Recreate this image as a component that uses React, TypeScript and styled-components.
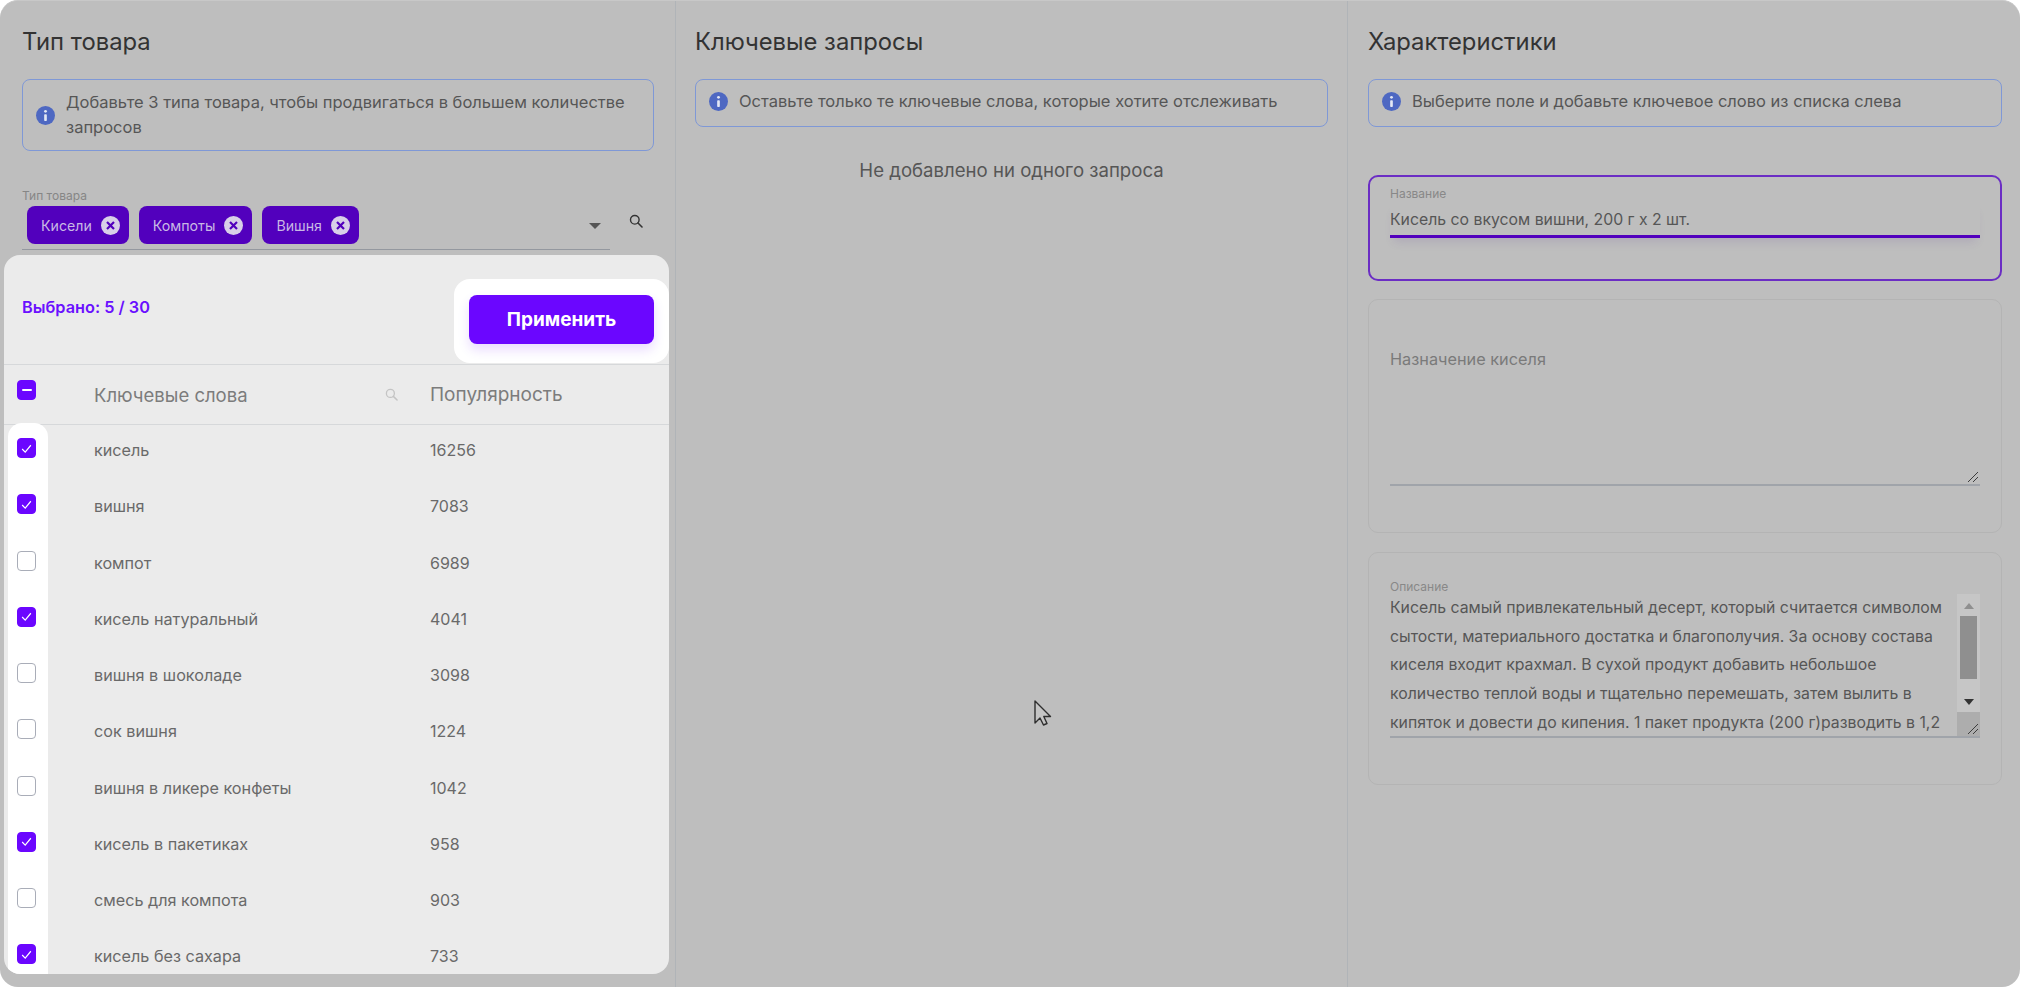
import React from "react";
import styled, { createGlobalStyle } from "styled-components";

const GlobalStyle = createGlobalStyle`
  html, body {
    margin: 0;
    padding: 0;
    background: #ffffff;
  }
  * {
    box-sizing: border-box;
  }
  body {
    font-family: Inter, "Noto Sans", "Liberation Sans", sans-serif;
  }
`;

const keywords = [
  { name: "кисель", count: 16256, checked: true },
  { name: "вишня", count: 7083, checked: true },
  { name: "компот", count: 6989, checked: false },
  { name: "кисель натуральный", count: 4041, checked: true },
  { name: "вишня в шоколаде", count: 3098, checked: false },
  { name: "сок вишня", count: 1224, checked: false },
  { name: "вишня в ликере конфеты", count: 1042, checked: false },
  { name: "кисель в пакетиках", count: 958, checked: true },
  { name: "смесь для компота", count: 903, checked: false },
  { name: "кисель без сахара", count: 733, checked: true },
];

const chips = ["Кисели", "Компоты", "Вишня"];

const descriptionLines = [
  "Кисель самый привлекательный десерт, который считается символом",
  "сытости, материального достатка и благополучия. За основу состава",
  "киселя входит крахмал. В сухой продукт добавить небольшое",
  "количество теплой воды и тщательно перемешать, затем вылить в",
  "кипяток и довести до кипения. 1 пакет продукта (200 г)разводить в 1,2",
];

const InfoIcon = () => (
  <InfoSvg viewBox="0 0 20 20">
    <circle cx="10" cy="10" r="10" fill="#4e68c2" />
    <circle cx="10" cy="5.6" r="1.5" fill="#e4e8f4" />
    <rect x="8.6" y="8.6" width="2.8" height="7.2" rx="0.8" fill="#e4e8f4" />
  </InfoSvg>
);

const SearchIcon = ({ color, size }: { color: string; size: number }) => (
  <svg width={size} height={size} viewBox="0 0 14 14" fill="none">
    <circle cx="5.8" cy="5.8" r="4.3" stroke={color} strokeWidth="1.4" />
    <path d="M9 9l4 4" stroke={color} strokeWidth="1.6" strokeLinecap="round" />
  </svg>
);

const ResizeGrip = () => (
  <GripSvg viewBox="0 0 12 12">
    <path d="M1 11L11 1M6 11l5-5" stroke="#3d3d3d" strokeWidth="1" fill="none" />
  </GripSvg>
);

const App: React.FC = () => {
  return (
    <>
      <GlobalStyle />
      <Board>
        <Column $right={21}>
          <Title>Тип товара</Title>
          <InfoBox $tall>
            <InfoIcon />
            <InfoText>Добавьте 3 типа товара, чтобы продвигаться в большем количестве запросов</InfoText>
          </InfoBox>
          <TypeLabel>Тип товара</TypeLabel>
          <TypeRow>
            <ChipField>
              {chips.map((chip) => (
                <Chip key={chip}>
                  {chip}
                  <svg width="19" height="19" viewBox="0 0 19 19">
                    <circle cx="9.5" cy="9.5" r="9.5" fill="#d8cfe8" />
                    <path d="M6 6l7 7M13 6l-7 7" stroke="#5200bd" strokeWidth="2.2" />
                  </svg>
                </Chip>
              ))}
              <DropArrow />
            </ChipField>
            <SearchSlot>
              <SearchIcon color="#333333" size={14} />
            </SearchSlot>
          </TypeRow>

          <Popup>
            <PopupHeader>
              <Selected>Выбрано: 5 / 30</Selected>
              <ApplySpot>
                <ApplyButton>Применить</ApplyButton>
              </ApplySpot>
            </PopupHeader>
            <TableHead>
              <HeadCheck>
                <CheckBox $checked>
                  <svg width="10" height="2" viewBox="0 0 10 2">
                    <rect width="10" height="2" rx="1" fill="#ffffff" />
                  </svg>
                </CheckBox>
              </HeadCheck>
              <HeadKeyword>
                Ключевые слова
                <SearchIcon color="#c4c4c4" size={13} />
              </HeadKeyword>
              <HeadCell>Популярность</HeadCell>
            </TableHead>
            <TableBody>
              {keywords.map((row, index) => (
                <Row key={row.name}>
                  <CheckCell $first={index === 0}>
                    <CheckBox $checked={row.checked}>
                      {row.checked && (
                        <svg width="13" height="13" viewBox="0 0 12 12" fill="none">
                          <path d="M2 6.500l2.800 2.800L10 3" stroke="#ffffff" strokeWidth="1.100" />
                        </svg>
                      )}
                    </CheckBox>
                  </CheckCell>
                  <KeywordCell>{row.name}</KeywordCell>
                  <CountCell>{row.count}</CountCell>
                </Row>
              ))}
            </TableBody>
          </Popup>
        </Column>

        <Column $divided $left={19}>
          <Title>Ключевые запросы</Title>
          <InfoBox>
            <InfoIcon />
            <InfoText>Оставьте только те ключевые слова, которые хотите отслеживать</InfoText>
          </InfoBox>
          <EmptyText>Не добавлено ни одного запроса</EmptyText>
        </Column>

        <Column $divided $left={20} $right={18}>
          <Title>Характеристики</Title>
          <InfoBox>
            <InfoIcon />
            <InfoText>Выберите поле и добавьте ключевое слово из списка слева</InfoText>
          </InfoBox>

          <NameCard>
            <FieldLabel>Название</FieldLabel>
            <NameValue>Кисель со вкусом вишни, 200 г x 2 шт.</NameValue>
          </NameCard>

          <PurposeCard>
            <PurposeArea>
              Назначение киселя
              <ResizeGrip />
            </PurposeArea>
          </PurposeCard>

          <DescriptionCard>
            <FieldLabel>Описание</FieldLabel>
            <DescriptionArea>
              <DescriptionText>
                {descriptionLines.map((line) => (
                  <DescriptionLine key={line}>{line}</DescriptionLine>
                ))}
              </DescriptionText>
              <ScrollBar>
                <ScrollTrack>
                  <ArrowUp />
                  <ScrollThumb />
                  <ArrowDown />
                </ScrollTrack>
                <ScrollCorner>
                  <ResizeGrip />
                </ScrollCorner>
              </ScrollBar>
            </DescriptionArea>
          </DescriptionCard>
        </Column>

        <Cursor width="18" height="26" viewBox="0 0 18 26">
          <path
            d="M1 1v22l5-5 3.500 7 3.500-1.500-3.200-7H16.500z"
            fill="#c4c4c4"
            stroke="#2e2e2e"
            strokeWidth="1.400"
            strokeLinejoin="round"
          />
        </Cursor>
      </Board>
    </>
  );
};

export default App;

const Board = styled.div`
  position: relative;
  display: grid;
  grid-template-columns: 675px 672px 673px;
  height: 987px;
  overflow: hidden;
  background: #bebebe;
  border-top: 1px solid #c8c8c8;
  border-radius: 18px;
`;

const Column = styled.section<{ $divided?: boolean; $left?: number; $right?: number }>`
  position: relative;
  padding: 25px ${(p) => p.$right ?? 19}px 0 ${(p) => p.$left ?? 22}px;
  border-left: ${(p) => (p.$divided ? "1px solid #b0b4b8" : "none")};
`;

const Title = styled.h2`
  margin: 0 0 22px;
  height: 31px;
  font-size: 23.8px;
  line-height: 31px;
  font-weight: 400;
  color: #333333;
`;

const InfoBox = styled.div<{ $tall?: boolean }>`
  display: flex;
  align-items: center;
  gap: 11px;
  height: ${(p) => (p.$tall ? "72px" : "48px")};
  padding: 0 13px ${(p) => (p.$tall ? "0" : "3px")};
  border: 1px solid #7f98d6;
  border-radius: 8px;
`;

const InfoSvg = styled.svg`
  flex: none;
  width: 19px;
  height: 19px;
`;

const InfoText = styled.p`
  margin: 0;
  font-size: 16.5px;
  line-height: 25px;
  color: #565656;
`;

const TypeLabel = styled.div`
  margin-top: 37px;
  height: 15px;
  font-size: 12px;
  line-height: 15px;
  color: #868686;
`;

const TypeRow = styled.div`
  display: flex;
  align-items: flex-start;
  margin-top: 1px;
`;

const ChipField = styled.div`
  position: relative;
  display: flex;
  gap: 10px;
  flex: none;
  width: 588px;
  height: 46px;
  padding: 2px 0 0 5px;
  border-bottom: 1px solid #94989f;
`;

const Chip = styled.span`
  display: flex;
  align-items: center;
  gap: 9px;
  height: 38px;
  padding: 0 9px 0 14px;
  border-radius: 8px;
  background: #5200bd;
  font-size: 14.2px;
  color: #c8b8e4;
`;

const DropArrow = styled.span`
  position: absolute;
  right: 9px;
  top: 19px;
  width: 0;
  height: 0;
  border-left: 6px solid transparent;
  border-right: 6px solid transparent;
  border-top: 6px solid #555555;
`;

const SearchSlot = styled.div`
  display: flex;
  justify-content: center;
  flex: none;
  width: 52px;
  padding-top: 10px;
`;

const Popup = styled.div`
  position: absolute;
  left: 4px;
  top: 254px;
  right: 6px;
  bottom: 13px;
  overflow: hidden;
  border-radius: 16px;
  background: #ebebeb;
`;

const PopupHeader = styled.div`
  display: flex;
  justify-content: space-between;
  align-items: flex-start;
  height: 110px;
  padding: 24px 0 0 18px;
  border-bottom: 1px solid #d6d8da;
`;

const Selected = styled.div`
  margin-top: 18px;
  font-size: 16.3px;
  line-height: 20px;
  font-weight: 600;
  color: #6a10ff;
`;

const ApplySpot = styled.div`
  padding: 16px 15px 19px 15px;
  border-radius: 16px;
  background: #ffffff;
`;

const ApplyButton = styled.button`
  display: block;
  width: 185px;
  height: 49px;
  border: none;
  border-radius: 8px;
  background: #6b06ff;
  box-shadow: 0 6px 12px rgba(107, 6, 255, 0.14);
  font-family: inherit;
  font-size: 19px;
  font-weight: 700;
  color: #ffffff;
`;

const TableHead = styled.div`
  display: flex;
  align-items: center;
  height: 60px;
  border-bottom: 1px solid #d6d8da;
`;

const HeadCheck = styled.div`
  display: flex;
  flex: none;
  width: 90px;
  padding: 0 0 10px 13px;
`;

const HeadKeyword = styled.div`
  display: flex;
  align-items: center;
  justify-content: space-between;
  flex: none;
  width: 336px;
  padding-right: 32px;
  font-size: 18.5px;
  color: #7c7c7c;
`;

const HeadCell = styled.div`
  font-size: 19px;
  color: #7c7c7c;
`;

const TableBody = styled.div`
  margin-top: -1px;
`;

const Row = styled.div`
  display: flex;
  align-items: center;
  height: 56.25px;
`;

const CheckCell = styled.div<{ $first?: boolean }>`
  display: flex;
  align-items: center;
  align-self: stretch;
  flex: none;
  width: 40px;
  margin: ${(p) => (p.$first ? "-1px 0 0 4px" : "0 0 0 4px")};
  padding: 0 0 ${(p) => (p.$first ? "7px" : "8px")} 9px;
  border-radius: ${(p) => (p.$first ? "14px 14px 0 0" : "0")};
  background: #ffffff;
`;

const CheckBox = styled.span<{ $checked?: boolean }>`
  display: flex;
  align-items: center;
  justify-content: center;
  width: 19px;
  height: 20px;
  border-radius: 4px;
  border: 1px solid ${(p) => (p.$checked ? "#6b06ff" : "#a9adb8")};
  background: ${(p) => (p.$checked ? "#6b06ff" : "#ffffff")};
`;

const KeywordCell = styled.div`
  flex: none;
  width: 336px;
  margin-left: 46px;
  padding-bottom: 4px;
  font-size: 16.2px;
  color: #696969;
`;

const CountCell = styled.div`
  padding-bottom: 4px;
  font-size: 16px;
  color: #696969;
`;

const EmptyText = styled.div`
  margin-top: 31px;
  font-size: 18.6px;
  line-height: 24px;
  text-align: center;
  color: #565656;
`;

const NameCard = styled.div`
  height: 106px;
  margin-top: 48px;
  padding: 9px 20px 0;
  border: 2px solid #6b2dc4;
  border-radius: 10px;
`;

const FieldLabel = styled.div`
  height: 15px;
  font-size: 12px;
  line-height: 15px;
  color: #888888;
`;

const NameValue = styled.div`
  height: 37px;
  padding-top: 7px;
  border-bottom: 3px solid #5200bd;
  box-shadow: 0 8px 10px -4px rgba(90, 60, 150, 0.14);
  font-size: 15.8px;
  line-height: 24px;
  color: #565656;
`;

const PurposeCard = styled.div`
  height: 234px;
  margin-top: 18px;
  padding: 0 21px;
  border: 1px solid #b4b4b4;
  border-radius: 10px;
`;

const PurposeArea = styled.div`
  position: relative;
  height: 186px;
  padding-top: 47px;
  border-bottom: 2px solid #a0a4aa;
  font-size: 16.3px;
  line-height: 24px;
  color: #7a7a7a;
`;

const GripSvg = styled.svg`
  position: absolute;
  right: 1px;
  bottom: 1px;
  width: 12px;
  height: 12px;
`;

const DescriptionCard = styled.div`
  height: 233px;
  margin-top: 19px;
  padding: 26px 21px 0;
  border: 1px solid #b4b4b4;
  border-radius: 10px;
`;

const DescriptionArea = styled.div`
  display: flex;
  height: 144px;
  overflow: hidden;
  border-bottom: 2px solid #a0a4aa;
`;

const DescriptionText = styled.div`
  flex: 1;
  font-size: 15.8px;
  line-height: 28.7px;
  color: #565656;
`;

const DescriptionLine = styled.div`
  white-space: nowrap;
`;

const ScrollBar = styled.div`
  display: flex;
  flex-direction: column;
  flex: none;
  width: 23px;
`;

const ScrollTrack = styled.div`
  display: flex;
  flex-direction: column;
  align-items: center;
  flex: 1;
  padding-top: 9px;
  background: #c6c6c6;
`;

const ArrowUp = styled.span`
  flex: none;
  width: 0;
  height: 0;
  border-left: 5px solid transparent;
  border-right: 5px solid transparent;
  border-bottom: 6px solid #8f8f8f;
`;

const ArrowDown = styled.span`
  flex: none;
  width: 0;
  height: 0;
  margin-top: 20px;
  border-left: 5px solid transparent;
  border-right: 5px solid transparent;
  border-top: 6px solid #333333;
`;

const ScrollThumb = styled.span`
  flex: none;
  width: 17px;
  height: 63px;
  margin-top: 7px;
  background: #8f8f8f;
`;

const ScrollCorner = styled.div`
  position: relative;
  flex: none;
  height: 24px;
  background: #adadad;
`;

const Cursor = styled.svg`
  position: absolute;
  left: 1034px;
  top: 699px;
`;
